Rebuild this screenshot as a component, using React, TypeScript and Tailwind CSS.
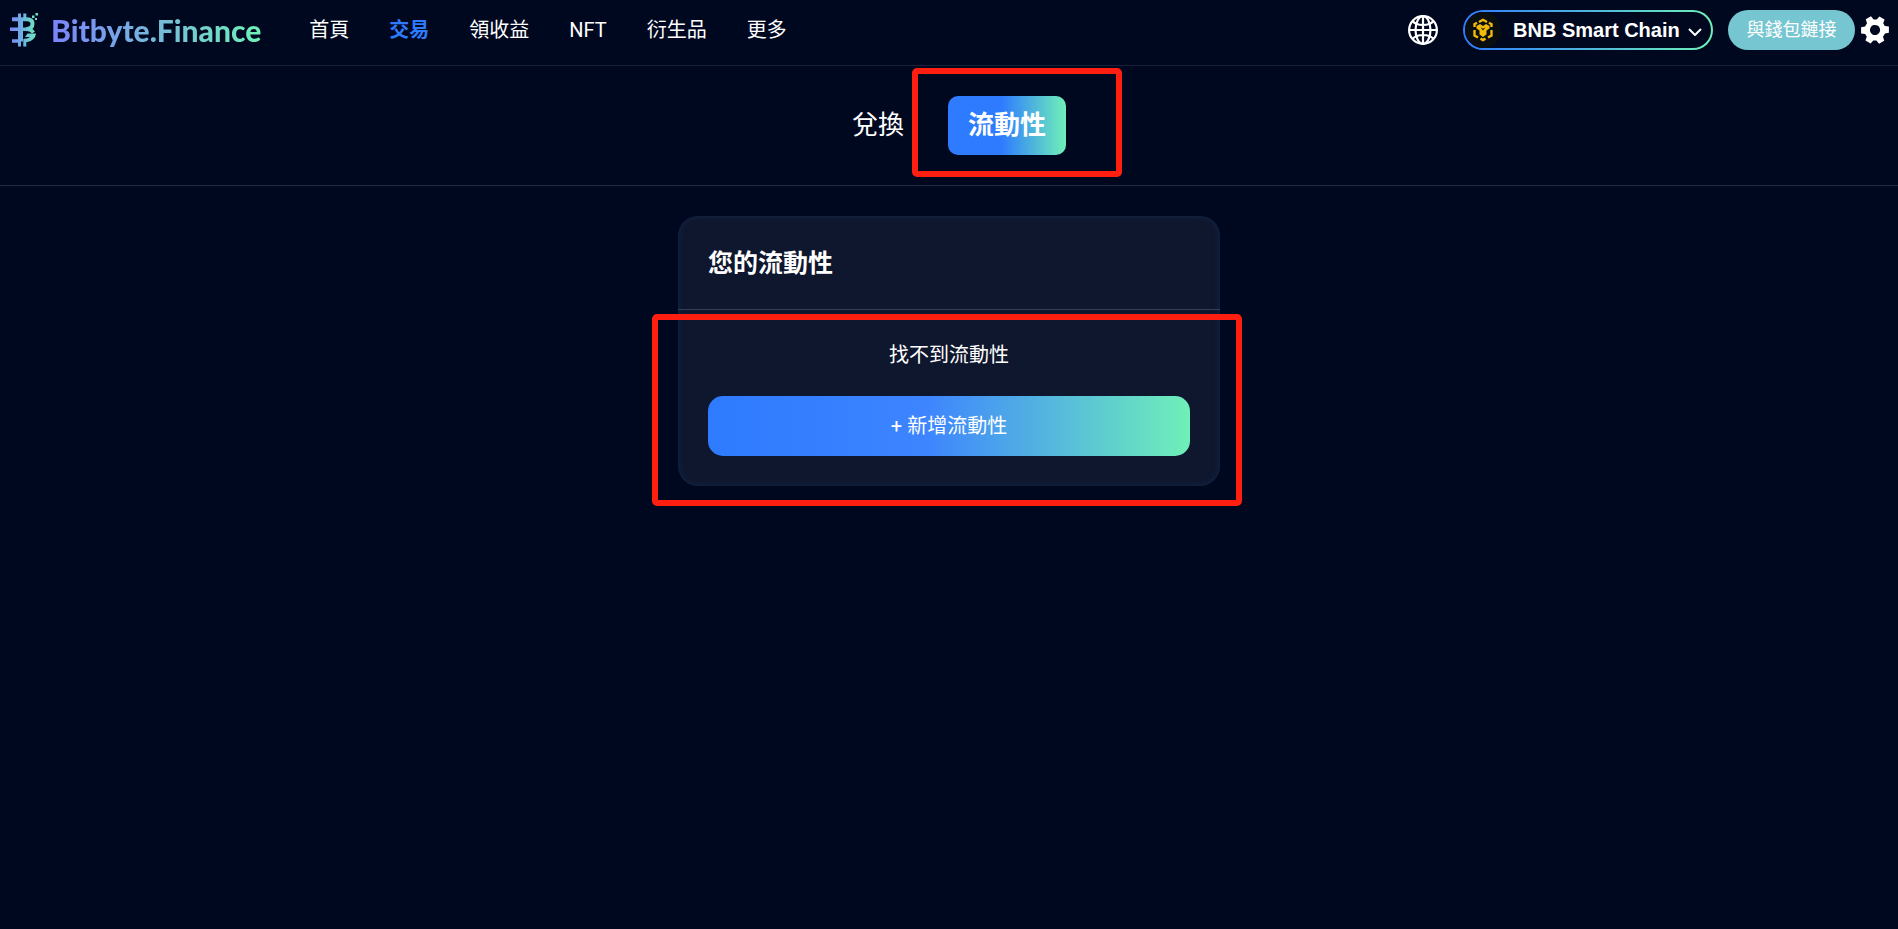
import clsx from "clsx";
import { ReactNode } from "react";

const NAV_ITEMS = [
  { label: "首頁", active: false },
  { label: "交易", active: true },
  { label: "領收益", active: false },
  { label: "NFT", active: false },
  { label: "衍生品", active: false },
  { label: "更多", active: false },
];

const LogoSVG = () => (
  <svg width="28" height="34" viewBox="0 0 28 34" fill="none" aria-hidden="true">
    <defs>
      <linearGradient id="logo" x1="0" y1="0" x2="28" y2="0" gradientUnits="userSpaceOnUse">
        <stop stopColor="#7b83fb" />
        <stop offset="0.5" stopColor="#6cb8dc" />
        <stop offset="1" stopColor="#6ff0b8" />
      </linearGradient>
    </defs>
    <g stroke="url(#logo)">
      <path d="M9.500 0.500V5M14.800 0.500V6M9.500 28V33.500M14.800 26V33.500" strokeWidth="3" />
      <path d="M10.500 5V28.500" strokeWidth="5" />
      <path d="M2 6.200H17C20.500 6.200 22.500 8 22.500 10.800C22.500 14 20 16 16 16.200" strokeWidth="4" />
      <path d="M0 16.200H17C20 16.200 22 17.500 23.500 19.500M2 28H9" strokeWidth="3.600" />
      <path d="M14 27.500C19 27.500 22 25.500 23.500 23" strokeWidth="3.600" />
    </g>
    <path d="M17.500 20.500H26L25 24H15Z" fill="url(#logo)" />
    <g fill="#6fe3c2">
      <path d="M25.500 0H28V2.500H25.500ZM22 2.500H24.500V5H22ZM25 5H27V7H25Z" />
    </g>
  </svg>
);

const GlobeSVG = () => (
  <svg width="30" height="30" viewBox="0 0 30 30" fill="none" stroke="white" strokeWidth="2.200" aria-hidden="true">
    <circle cx="15" cy="15" r="13.900" />
    <ellipse cx="15" cy="15" rx="7.500" ry="13.900" />
    <path d="M15 1V29M1 15H29M4.500 6C7 9 11 10 15 10S23 9 25.500 6M4.500 24C7 21 11 20 15 20S23 21 25.500 24" />
  </svg>
);

const BnbSVG = () => (
  <svg width="36" height="36" viewBox="0 0 36 36" fill="none" aria-hidden="true">
    <circle cx="18" cy="18" r="18" fill="#0b0e11" />
    <g stroke="#f0b90b" strokeWidth="2.400">
      <path d="M14 10L18 7.800L22 10M9.500 15V12.200L12 10.800M24 10.800L26.500 12.200V15M9.500 18V23.500L13 25.500M26.500 18V23.500L23 25.500M15.500 26.600L18 28L20.500 26.600" />
    </g>
    <path d="M11.500 14L15 12L18 14L21 12L24.500 14V16.500L21.500 18.500V22.500L18 25L14.500 22.500V18.500L11.500 16.500Z" fill="#f0b90b" />
    <path d="M18 10.300L20 11.500L18 12.700L16 11.500ZM15.500 15.300L18 16.800L20.500 15.300L18 18.600Z" fill="#0b0e11" />
  </svg>
);

// 톱니 6개짜리 기어
const GearSVG = () => (
  <svg width="30" height="30" viewBox="2 2 20 20" fill="white" aria-hidden="true">
    <path
      transform="rotate(30 12 12)"
      fillRule="evenodd"
      d="M10 2.700H14L14.500 5.400L16.300 6.400L18.900 5.400L20.900 8.900L18.900 10.700V13.300L20.900 15.100L18.900 18.600L16.300 17.600L14.500 18.600L14 21.300H10L9.500 18.600L7.700 17.600L5.100 18.600L3.100 15.100L5.100 13.300V10.700L3.100 8.900L5.100 5.400L7.700 6.400L9.500 5.400ZM12 8.600A3.400 3.400 0 1 0 12 15.400A3.400 3.400 0 1 0 12 8.600Z"
    />
  </svg>
);

const Header = () => (
  <header className="flex h-[66px] items-center justify-between border-b border-[#172139] pb-4 pl-[10px] pr-2 pt-[10px]">
    <div className="flex items-center">
      <a href="#" className="flex items-center gap-[13px]">
        <LogoSVG />
        <span className="bg-linear-to-r/srgb from-[#7b83fb] to-[#6ff0b8] bg-clip-text font-[Lato] text-[30px] leading-10 font-black text-transparent">
          Bitbyte.Finance
        </span>
      </a>
      <nav className="ml-12 flex gap-10">
        {NAV_ITEMS.map(({ label, active }) => (
          <a
            key={label}
            href="#"
            className={clsx("text-xl leading-10", {
              "font-bold text-[#2e7bff]": active,
            })}
          >
            {label}
          </a>
        ))}
      </nav>
    </div>

    <div className="flex items-center">
      <button type="button" aria-label="語言">
        <GlobeSVG />
      </button>
      <button
        type="button"
        className="ml-[25px] h-10 w-[250px] rounded-full bg-linear-to-r/srgb from-[#2e7bff] to-[#6ff0b8] p-[2px]"
      >
        <span className="flex h-full items-center rounded-full bg-[#000820]">
          <BnbSVG />
          <span className="ml-3 font-['Liberation_Sans'] text-xl font-bold">
            BNB Smart Chain
          </span>
          <svg width="14" height="8" viewBox="0 0 14 8" fill="none" className="ml-2 mt-1" aria-hidden="true">
            <path d="M1 1L7 7L13 1" stroke="white" strokeWidth="2" />
          </svg>
        </span>
      </button>
      <button
        type="button"
        className="ml-[15px] h-10 w-[127px] rounded-full bg-[#76c6d2] text-lg leading-10"
      >
        與錢包鏈接
      </button>
      <button type="button" aria-label="設定" className="ml-[5px]">
        <GearSVG />
      </button>
    </div>
  </header>
);

// 빨간색 강조 박스
const Highlight = ({ className }: { className: string }) => (
  <div
    className={clsx(
      "pointer-events-none absolute rounded-[5px] border-[6px] border-[#ff1e10]",
      className,
    )}
  />
);

const Tabs = () => (
  <div className="flex h-[120px] items-center justify-center gap-6 border-b border-[#1e2c48]">
    <button type="button" className="px-5 text-[26px]">
      兌換
    </button>
    <div className="relative">
      <button
        type="button"
        className="h-[59px] rounded-[10px] bg-linear-to-r/srgb from-[#2e7bff] from-45% to-[#6ff0b8] px-5 text-[26px] font-bold"
      >
        流動性
      </button>
      <Highlight className="-bottom-[22px] -left-9 -right-14 -top-7" />
    </div>
  </div>
);

const Card = ({ title, children }: { title: string; children: ReactNode }) => (
  <section className="mx-auto mt-[30px] w-[542px] rounded-[20px] bg-[#0f172e] shadow-[inset_0_0_6px_#12284a]">
    <h2 className="border-b border-[#333f58] px-[30px] pb-[27px] pt-[29px] text-[25px] leading-[37px] font-bold">
      {title}
    </h2>
    {children}
  </section>
);

export default function App() {
  return (
    <div className="min-h-screen bg-[#000820] font-[Roboto,'Noto_Sans_CJK_TC',sans-serif] text-white">
      <Header />
      <main>
        <Tabs />
        <Card title="您的流動性">
          <div className="relative px-[30px] pb-[30px] pt-[30px] text-xl">
            <p className="text-center leading-[30px]">找不到流動性</p>
            <button
              type="button"
              className="mt-[26px] h-[60px] w-full rounded-[15px] bg-linear-to-r/srgb from-[#2e7bff] via-[#3d84ff] via-45% to-[#6ff0b8]"
            >
              + 新增流動性
            </button>
            <Highlight className="-bottom-5 -left-[26px] -right-[22px] top-1" />
          </div>
        </Card>
      </main>
    </div>
  );
}
